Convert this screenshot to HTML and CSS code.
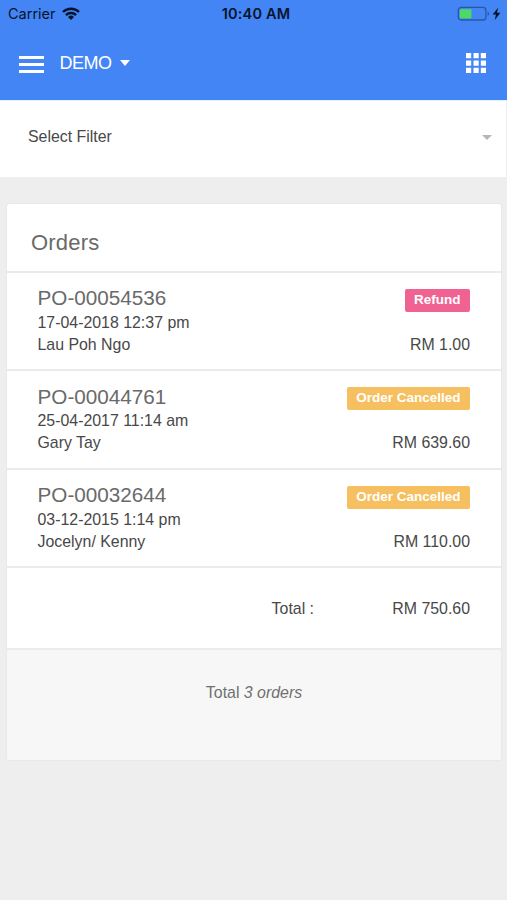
FILE: index.html
```
<!DOCTYPE html>
<html lang="en">
  <head>
    <meta charset="UTF-8" />
    <meta name="viewport" content="width=device-width, initial-scale=1.0" />
    <title>Orders</title>
    <link rel="stylesheet" href="styles.css">
  </head>
  <body>
    <header class="header">
      <!-- Status bar -->
      <div class="status-bar">
        <div class="carrier">
          <span>Carrier</span>
          <svg width="18" height="13" viewBox="0 0 18 13">
            <g fill="none" stroke="#07142b" stroke-width="2.4">
              <path d="M1 5a11.4 11.4 0 0 1 16 0" />
              <path d="M3.9 8.1a7.3 7.3 0 0 1 10.2 0" />
            </g>
            <path fill="#07142b" d="M6 9.9a4.3 4.3 0 0 1 6 0L9 12.9z" />
          </svg>
        </div>
        <div class="time">10:40 AM</div>
        <div class="battery">
          <svg width="46" height="16" viewBox="0 0 46 16">
            <rect x="1.3" y="1.4" width="27.6" height="12.6" rx="3" fill="none" stroke="#2857a8" stroke-width="1.3" />
            <rect x="2.8" y="3.2" width="11.6" height="9.3" rx="1" fill="#4cda62" />
            <path d="M30.6 5.7c1.9.5 1.9 3.6 0 4.1z" fill="#2857a8" />
            <path d="M41.3 1.6L35.6 8.6h3.3l-1.1 5.4 5.6-7.3h-3.5z" fill="#07142b" />
          </svg>
        </div>
      </div>

      <!-- Navigation -->
      <nav class="navbar">
        <div class="menu-icon"><span></span><span></span><span></span></div>
        <div class="shop-name">DEMO</div>
        <div class="caret"></div>
        <svg class="apps-icon" width="20" height="20" viewBox="0 0 20 20" fill="#fff">
          <path d="M0 0h5.2v5.2H0zM7.5 0h5.2v5.2H7.5zM14.8 0H20v5.2h-5.2zM0 7.5h5.2v5.2H0zM7.5 7.5h5.2v5.2H7.5zM14.8 7.5H20v5.2h-5.2zM0 14.8h5.2V20H0zM7.5 14.8h5.2V20H7.5zM14.8 14.8H20V20h-5.2z" />
        </svg>
      </nav>
    </header>

    <!-- Filter -->
    <div class="filter">
      <span>Select Filter</span>
      <div class="caret caret-grey"></div>
    </div>

    <!-- Orders -->
    <main class="card">
      <h1 class="card-title">Orders</h1>

      <div class="order">
        <div class="order-info">
          <h2>PO-00054536</h2>
          <p>17-04-2018 12:37 pm</p>
          <p>Lau Poh Ngo</p>
        </div>
        <div class="order-side">
          <span class="label label-refund">Refund</span>
          <p>RM 1.00</p>
        </div>
      </div>

      <div class="order">
        <div class="order-info">
          <h2>PO-00044761</h2>
          <p>25-04-2017 11:14 am</p>
          <p>Gary Tay</p>
        </div>
        <div class="order-side">
          <span class="label label-cancelled">Order Cancelled</span>
          <p>RM 639.60</p>
        </div>
      </div>

      <div class="order">
        <div class="order-info">
          <h2>PO-00032644</h2>
          <p>03-12-2015 1:14 pm</p>
          <p>Jocelyn/ Kenny</p>
        </div>
        <div class="order-side">
          <span class="label label-cancelled">Order Cancelled</span>
          <p>RM 110.00</p>
        </div>
      </div>

      <div class="total">
        <span>Total :</span>
        <span class="total-amount">RM 750.60</span>
      </div>

      <footer class="card-footer">Total <em>3 orders</em></footer>
    </main>
  </body>
</html>
```
FILE: styles.css
```
* {
  box-sizing: border-box;
  margin: 0;
  padding: 0;
}

body {
  min-height: 900px;
  font-family: "Liberation Sans", Arial, sans-serif;
  font-size: 15.9px;
  line-height: 22px;
  color: #484848;
  background-color: #eeeeee;
}

svg {
  display: block;
}

/* header */
.header {
  height: 100px;
  background-color: #4385f5;
}

.status-bar {
  display: grid;
  grid-template-columns: 1fr auto 1fr;
  align-items: center;
  height: 28px;
  padding: 0 4px 0 8px;
  font-family: Inter, sans-serif;
  font-size: 14.5px;
  color: #07142b;
}

.carrier {
  display: flex;
  align-items: center;
  gap: 6px;
}

.carrier svg {
  margin-top: -2px;
}

.time {
  padding-left: 1px;
  font-weight: 600;
  letter-spacing: 0.2px;
}

.battery {
  justify-self: end;
}

.navbar {
  display: flex;
  align-items: center;
  height: 70px;
  padding: 0 21px 0 19px;
}

.menu-icon {
  display: flex;
  flex-direction: column;
  gap: 4px;
  width: 25px;
  margin-top: 3px;
}

.menu-icon span {
  height: 3px;
  background-color: #fff;
}

.shop-name {
  margin-left: 15.5px;
  font-size: 18px;
  letter-spacing: -0.5px;
  color: #fff;
}

.caret {
  margin-left: 8px;
  border: 5.5px solid transparent;
  border-top: 6px solid #fff;
  border-bottom: 0;
}

.caret-grey {
  border-width: 5px 5px 0;
  border-top-color: #b5b5b5;
}

.apps-icon {
  margin-left: auto;
}

/* filter */
.filter {
  display: flex;
  align-items: center;
  justify-content: space-between;
  height: 77px;
  margin-right: 1px;
  padding: 0 14px 4px 28px;
  border-top: 1px solid #e1f2fd;
  background-color: #fff;
}

/* orders card */
.card {
  margin: 27px 6px 0 7px;
  border-radius: 3px 3px 0 0;
  background-color: #fff;
  box-shadow: 0 0 2px rgba(0, 0, 0, 0.08);
}

.card-title {
  height: 66.5px;
  padding: 24px 24px 0;
  font-size: 22px;
  font-weight: 300;
  line-height: 30px;
  letter-spacing: 0.2px;
  color: #6a6a6a;
}

.order {
  display: flex;
  justify-content: space-between;
  height: 98.6px;
  padding: 13.5px 31px 0 30.5px;
  border-top: 2px solid #e9ebec;
}

.order-info h2 {
  font-size: 20.7px;
  font-weight: 300;
  line-height: 23px;
  margin-bottom: 2.5px;
  color: #6a6a6a;
}

.order-side {
  display: flex;
  flex-direction: column;
  align-items: flex-end;
  justify-content: space-between;
  height: 69.5px;
  padding-top: 2.5px;
}

.label {
  height: 23px;
  padding: 0 9.5px;
  border-radius: 2px;
  font-size: 13.5px;
  font-weight: bold;
  color: #fff;
}

.label-refund {
  background-color: #f06292;
}

.label-cancelled {
  background-color: #f6bf5f;
}

.total {
  display: flex;
  justify-content: flex-end;
  height: 82px;
  padding: 30px 31px 0;
  border-top: 2px solid #e9ebec;
}

.total-amount {
  width: 156px;
  text-align: right;
}

.card-footer {
  height: 112px;
  padding-top: 32px;
  border-top: 2px solid #ececec;
  text-align: center;
  color: #707070;
  background-color: #f7f7f7;
}
```
